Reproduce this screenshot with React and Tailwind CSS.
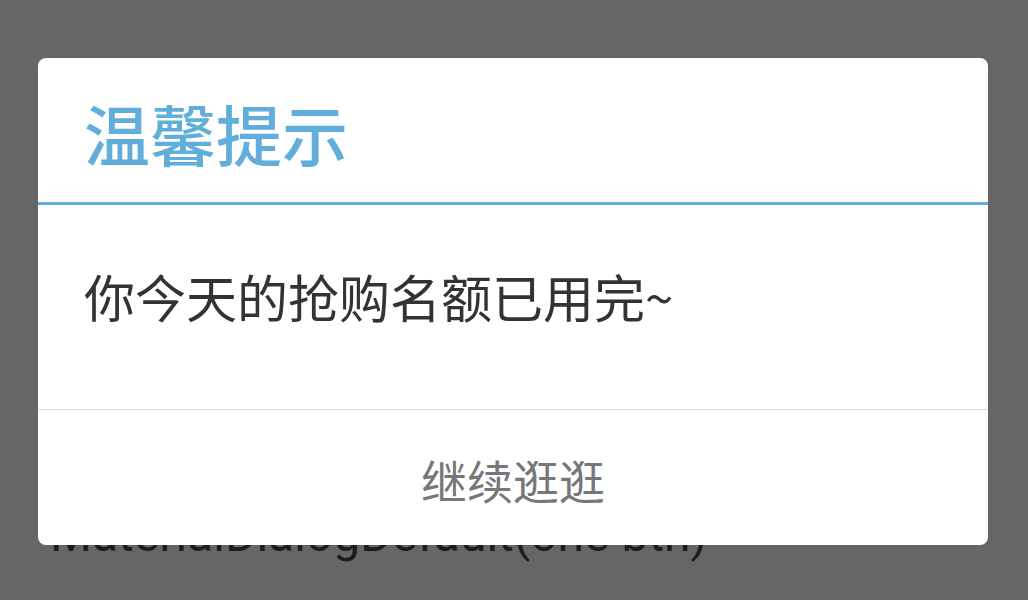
export default function App() {
  return (
    <div
      className="relative w-[1028px] h-[600px] overflow-hidden bg-[#666666]"
      style={{ fontFamily: '"Noto Sans CJK SC", "Noto Sans", sans-serif' }}
    >
      {/* page content behind the dialog */}
      <div className="pt-[511px] pl-[50px]">
        <p className="font-['Roboto',sans-serif] text-[48px] leading-none text-[#1c1c1c] whitespace-nowrap">
          MaterialDialogDefault(one btn)
        </p>
      </div>

      {/* dialog */}
      <div className="absolute left-[38px] top-[58px] w-[950px] h-[487px] bg-white rounded-lg flex flex-col overflow-hidden">
        <div className="h-[147px] pt-[41px] px-[46px] border-b-[3px] border-[#62aedb]">
          <h2 className="text-[66px] leading-none text-[#62aedb] font-medium">温馨提示</h2>
        </div>
        <div className="h-[205px] pt-[66px] px-[46px] border-b border-[#dddddd]">
          <p className="text-[51px] leading-none text-[#333333]">你今天的抢购名额已用完~</p>
        </div>
        <div className="flex-1 flex justify-center items-start pt-[46px]">
          <button className="text-[46px] leading-none text-[#777777]">继续逛逛</button>
        </div>
      </div>
    </div>
  );
}
